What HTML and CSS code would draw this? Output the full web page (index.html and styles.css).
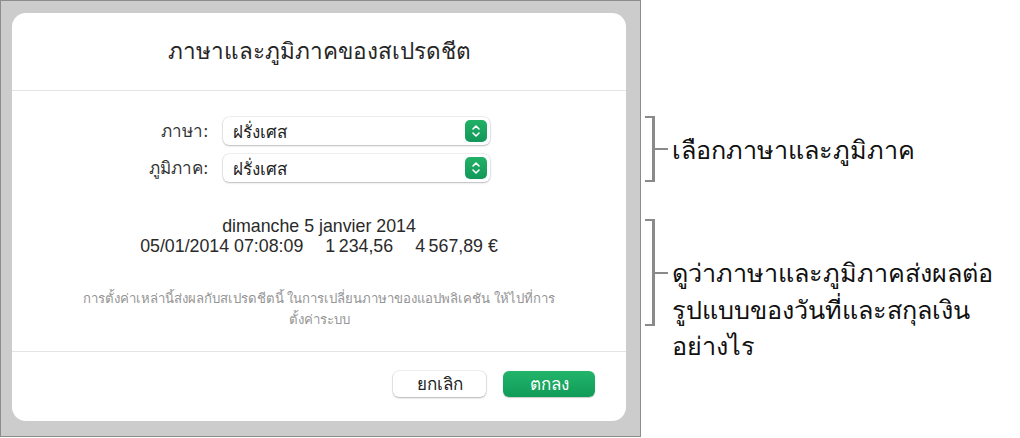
FILE: index.html
```html
<!DOCTYPE html>
<html>
<head>
	<title>ภาษาและภูมิภาคของสเปรดชีต</title>
	<meta charset="utf-8">
	<link rel="stylesheet" href="styles.css">
</head>
<body>
	<div class="panel">
		<div class="dialog">
			<div class="dialog-header">ภาษาและภูมิภาคของสเปรดชีต</div>
			<div class="dialog-body">
				<div class="fields">
					<label class="field-label">ภาษา:</label>
					<div class="popup">
						<span>ฝรั่งเศส</span>
						<span class="stepper">
							<svg width="10" height="14" viewBox="0 0 10 14"><path d="M2 5 L5 2 L8 5 M2 9 L5 12 L8 9" fill="none" stroke="#fff" stroke-width="1.6" stroke-linecap="round" stroke-linejoin="round"/></svg>
						</span>
					</div>
					<label class="field-label">ภูมิภาค:</label>
					<div class="popup">
						<span>ฝรั่งเศส</span>
						<span class="stepper">
							<svg width="10" height="14" viewBox="0 0 10 14"><path d="M2 5 L5 2 L8 5 M2 9 L5 12 L8 9" fill="none" stroke="#fff" stroke-width="1.6" stroke-linecap="round" stroke-linejoin="round"/></svg>
						</span>
					</div>
				</div>
				<div class="sample">
					<div>dimanche 5 janvier 2014</div>
					<div class="sample-row">
						<span>05/01/2014 07:08:09</span>
						<span>1&#8239;234,56</span>
						<span>4&#8239;567,89&nbsp;€</span>
					</div>
				</div>
				<p class="note">การตั้งค่าเหล่านี้ส่งผลกับสเปรดชีตนี้ ในการเปลี่ยนภาษาของแอปพลิเคชัน ให้ไปที่การ<br>ตั้งค่าระบบ</p>
			</div>
			<div class="dialog-footer">
				<button class="btn">ยกเลิก</button>
				<button class="btn btn-primary">ตกลง</button>
			</div>
		</div>
	</div>

	<div class="callouts">
		<div class="callout">
			<div class="bracket bracket-short">
				<div class="bracket-arm"></div>
				<div class="bracket-tick"></div>
			</div>
			<div class="callout-text callout-text-short">เลือกภาษาและภูมิภาค</div>
		</div>
		<div class="callout callout-second">
			<div class="bracket bracket-tall">
				<div class="bracket-arm"></div>
				<div class="bracket-tick"></div>
			</div>
			<div class="callout-text callout-text-tall">ดูว่าภาษาและภูมิภาคส่งผลต่อ<br>รูปแบบของวันที่และสกุลเงิน<br>อย่างไร</div>
		</div>
	</div>
</body>
</html>
```

FILE: styles.css
```css
*, *:before, *:after {
	box-sizing: border-box;
}

body {
	margin: 0;
	background: #fff;
	font-family: 'Noto Sans', 'Liberation Sans', sans-serif;
	color: #222;
	display: flex;
	align-items: flex-start;
}

.panel {
	width: 641px;
	height: 437px;
	background: #cccccc;
	border: 1px solid #8c8c8c;
	padding: 12px 14px 14px 11px;
}

.dialog {
	width: 614px;
	height: 408px;
	background: #fff;
	border-radius: 14px;
	display: flex;
	flex-direction: column;
}

.dialog-header {
	height: 78px;
	border-bottom: 1px solid #e4e4e4;
	display: flex;
	align-items: center;
	justify-content: center;
	font-size: 22.5px;
	color: #262626;
	padding-bottom: 2px;
}

.dialog-body {
	height: 261px;
	border-bottom: 1px solid #e4e4e4;
	padding-top: 26px;
}

.fields {
	display: grid;
	grid-template-columns: 196px 267px;
	column-gap: 15px;
	row-gap: 9px;
}

.field-label {
	text-align: right;
	font-size: 17px;
	color: #333;
	line-height: 28px;
}

.popup {
	height: 28px;
	background: #fff;
	border-radius: 6px;
	box-shadow: 0 0 0 0.5px rgba(0,0,0,0.12), 0 1px 2px rgba(0,0,0,0.22);
	display: flex;
	align-items: center;
	justify-content: space-between;
	padding: 0 3px 0 10px;
	font-size: 17px;
	color: #222;
}

.stepper {
	width: 22px;
	height: 22px;
	border-radius: 5px;
	background: linear-gradient(#22b066, #12985a);
	display: flex;
	align-items: center;
	justify-content: center;
}

.sample {
	margin-top: 34px;
	text-align: center;
	font-family: 'Liberation Sans', sans-serif;
	font-size: 17.8px;
	line-height: 20px;
	color: #2a2a2a;
}

.sample-row {
	display: flex;
	justify-content: center;
	gap: 22px;
}

.note {
	margin: 32px 0 0;
	padding: 0 30px;
	text-align: center;
	font-size: 13.2px;
	line-height: 21px;
	color: #959595;
}

.dialog-footer {
	display: flex;
	justify-content: flex-end;
	gap: 17px;
	padding: 19px 31px 0 0;
}

.btn {
	width: 93px;
	height: 26px;
	border: none;
	border-radius: 6px;
	background: #fff;
	box-shadow: 0 0 0 0.5px rgba(0,0,0,0.12), 0 1px 2px rgba(0,0,0,0.25);
	font-family: inherit;
	font-size: 17px;
	line-height: 26px;
	padding: 0;
	color: #222;
}

.btn-primary {
	width: 92px;
	background: linear-gradient(#23b46b, #0f9c58);
	color: #fff;
	box-shadow: 0 0.5px 1px rgba(0,0,0,0.2);
}

.callouts {
	margin-left: 4px;
	padding-top: 116px;
}

.callout {
	display: flex;
	align-items: flex-start;
}

.callout-second {
	margin-top: 37px;
}

.bracket {
	display: flex;
	align-items: center;
}

.bracket-short {
	height: 66px;
}

.bracket-tall {
	height: 107px;
}

.bracket-arm {
	width: 10px;
	height: 100%;
	border: 2px solid #8a8a8a;
	border-left: none;
	border-right-width: 3px;
}

.bracket-tick {
	width: 13px;
	height: 2px;
	background: #8a8a8a;
}

.callout-text {
	margin-left: 4px;
	font-size: 25.2px;
	line-height: 36.5px;
	color: #111;
}

.callout-text-short {
	margin-top: 15px;
}

.callout-text-tall {
	margin-top: 35px;
}
```
